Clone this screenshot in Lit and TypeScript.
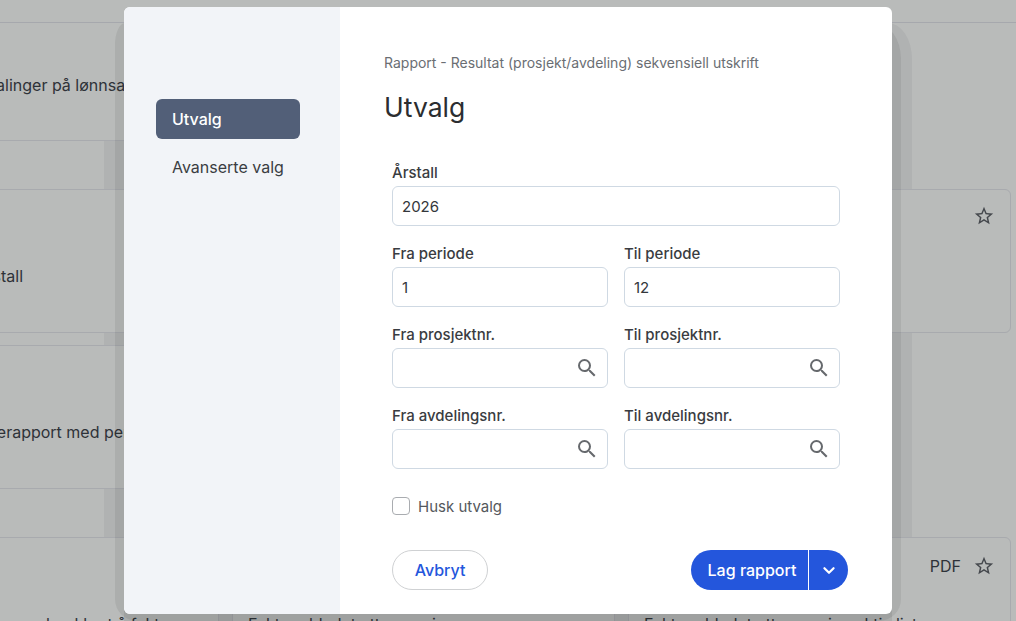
import { LitElement, html, css, svg } from 'lit';
import { customElement } from 'lit/decorators.js';

const starIcon = html`<svg class="star" viewBox="0 0 24 24" width="22" height="22">
  ${svg`<path d="M22 9.24l-7.19-.62L12 2 9.19 8.63 2 9.24l5.46 4.73L5.82 21 12 17.27 18.18 21l-1.63-7.03L22 9.24zM12 15.4l-3.76 2.27 1-4.28-3.32-2.88 4.38-.38L12 6.1l1.71 4.04 4.38.38-3.32 2.88 1 4.28L12 15.4z"/>`}
</svg>`;

const searchIcon = html`<svg class="search" viewBox="0 0 24 24" width="24" height="24">
  ${svg`<path d="M15.5 14h-.79l-.28-.27A6.47 6.47 0 0 0 16 9.5 6.5 6.5 0 1 0 9.5 16c1.61 0 3.09-.59 4.23-1.57l.27.28v.79l5 4.99L20.49 19l-4.99-5zm-6 0C7.01 14 5 11.99 5 9.5S7.01 5 9.5 5 14 7.01 14 9.5 11.99 14 9.5 14z"/>`}
</svg>`;

@customElement('app-root')
export class AppRoot extends LitElement {
  static styles = css`
    :host {
      display: block;
      font-family: Inter, "Liberation Sans", sans-serif;
    }
    .page {
      position: relative;
      width: 1016px;
      height: 621px;
      overflow: hidden;
      background: #b9bbba;
      color: #2e3238;
    }
    /* banded modal shadow, one layer under the cards and two above */
    .shade {
      position: absolute;
      top: 23px;
    }
    .shade-wide {
      left: 104px;
      width: 808px;
      bottom: 0;
      background: rgba(20, 20, 30, 0.05);
      border-radius: 24px 24px 0 0 / 36px 36px 0 0;
    }
    .shade-near {
      left: 115px;
      width: 786px;
      bottom: 0;
      background: rgba(20, 20, 30, 0.08);
      border-radius: 10px 26px 22px 22px / 22px 36px 22px 22px;
    }
    .shade-under {
      top: 600px;
      left: 124px;
      width: 768px;
      bottom: 0;
      background: rgba(0, 0, 0, 0.07);
    }
    .rows {
      position: relative;
      display: flex;
      flex-direction: column;
    }
    .topbar {
      height: 22px;
      border-bottom: 1px solid #a6a8ad;
    }
    .row {
      display: grid;
      grid-template-columns: repeat(3, 383px);
      column-gap: 13px;
      margin-left: -164px;
      flex: none;
    }
    .row-first { height: 118px; }
    .row-mid { height: 144px; margin-top: 48px; }
    .row-close { height: 144px; margin-top: 12px; }
    .row-last { height: 120px; margin-top: 48px; }
    .card {
      box-sizing: border-box;
      border: 1px solid #a8aaae;
      border-radius: 6px;
      background: #b9bbba;
      font-size: 16px;
      line-height: 20px;
      padding: 76px 15px 0;
      white-space: nowrap;
    }
    .row-first .card {
      border-top: none;
      border-radius: 0 0 6px 6px;
      padding-top: 52px;
    }
    .card.right {
      padding-top: 14px;
    }
    .tools {
      display: flex;
      justify-content: flex-end;
      gap: 12px;
    }
    .pdf {
      line-height: 28px;
    }
    .star {
      fill: #45484d;
      display: block;
      margin-top: 1px;
    }
    .row-last .star {
      margin-top: 3px;
    }
    .row-last .name {
      margin-top: 34px;
    }
    .modal {
      position: absolute;
      left: 124px;
      top: 7px;
      width: 768px;
      height: 607px;
      display: flex;
      border-radius: 6px;
      overflow: hidden;
      background: #fff;
    }
    .side {
      box-sizing: border-box;
      width: 216px;
      padding: 92px 40px 0 32px;
      background: #f2f4f8;
      display: flex;
      flex-direction: column;
      gap: 8px;
    }
    .nav {
      height: 40px;
      display: flex;
      align-items: center;
      padding-left: 16px;
      border-radius: 6px;
      font-size: 16px;
      color: #3a3d42;
    }
    .nav.active {
      background: #525f78;
      color: #fff;
      font-weight: 500;
    }
    .main {
      flex: 1;
      box-sizing: border-box;
      padding: 47px 44px 0;
      display: flex;
      flex-direction: column;
    }
    .crumb {
      font-size: 14px;
      line-height: 18px;
      color: #6a6e73;
    }
    h1 {
      margin: 19px 0 0;
      font-size: 26.5px;
      line-height: 32px;
      font-weight: 400;
      color: #2b2d30;
    }
    .form {
      margin: 40px 8px 0;
      display: grid;
      grid-template-columns: 1fr 1fr;
      column-gap: 16px;
      row-gap: 18px;
    }
    .wide { grid-column: 1 / -1; }
    label {
      display: block;
      margin-bottom: 3px;
      font-size: 15px;
      line-height: 20px;
      font-weight: 450;
      color: #393c41;
    }
    .input {
      box-sizing: border-box;
      height: 40px;
      border: 1px solid #cfd9e3;
      border-radius: 6px;
      padding: 0 8px 0 9px;
      display: flex;
      align-items: center;
      justify-content: space-between;
      font-size: 15px;
      color: #34373b;
    }
    .search {
      fill: #66696d;
      margin-left: auto;
      display: block;
    }
    .check {
      margin: 28px 8px 0;
      display: flex;
      align-items: center;
      gap: 8px;
      font-size: 15px;
      color: #55585c;
      height: 18px;
    }
    .box {
      box-sizing: border-box;
      width: 18px;
      height: 18px;
      border: 1px solid #a9acb0;
      border-radius: 4px;
    }
    .actions {
      margin: 35px 0 0 8px;
      display: flex;
      justify-content: space-between;
    }
    .btn {
      box-sizing: border-box;
      height: 40px;
      font-size: 16px;
      font-weight: 500;
      display: flex;
      align-items: center;
      justify-content: center;
    }
    .cancel {
      width: 96px;
      border: 1px solid #cfd1d3;
      border-radius: 20px;
      color: #2456dc;
    }
    .split {
      display: flex;
      color: #fff;
    }
    .primary {
      width: 117px;
      padding-left: 5px;
      background: #2456dc;
      border-radius: 20px 0 0 20px;
    }
    .more {
      width: 39px;
      margin-left: 1px;
      background: #2456dc;
      border-radius: 0 20px 20px 0;
    }
    .more svg {
      fill: none;
      stroke: #fff;
      stroke-width: 2.4;
      stroke-linecap: round;
      stroke-linejoin: round;
      display: block;
    }
  `;

  private field(name: string, value = '', lookup = false, wide = false) {
    return html`<div class=${wide ? 'wide' : ''}>
      <label>${name}</label>
      <div class="input">${value}${lookup ? searchIcon : ''}</div>
    </div>`;
  }

  render() {
    return html`
      <div class="page">
        <div class="shade shade-wide"></div>
        <div class="rows">
          <div class="topbar"></div>
          <div class="row row-first">
            <div class="card">Oversikt over utbetalinger på lønnsart</div>
          </div>
          <div class="row row-mid">
            <div class="card">Feriepenger per årstall</div>
            <div class="card"></div>
            <div class="card right"><div class="tools">${starIcon}</div></div>
          </div>
          <div class="row row-close">
            <div class="card">Lønn og arbeidsgiverapport med periode</div>
          </div>
          <div class="row row-last">
            <div class="card">Oversikt innbetalinger pr. bankkort å fakturere</div>
            <div class="card">Faktura bladet etter versjon</div>
            <div class="card right">
              <div class="tools"><span class="pdf">PDF</span>${starIcon}</div>
              <div class="name">Faktura bladet etter versjon aktiv liste</div>
            </div>
          </div>
        </div>
        <div class="shade shade-near"></div>
        <div class="shade shade-under"></div>

        <div class="modal">
          <div class="side">
            <div class="nav active">Utvalg</div>
            <div class="nav">Avanserte valg</div>
          </div>
          <div class="main">
            <div class="crumb">Rapport - Resultat (prosjekt/avdeling) sekvensiell utskrift</div>
            <h1>Utvalg</h1>
            <div class="form">
              ${this.field('Årstall', '2026', false, true)}
              ${this.field('Fra periode', '1')}
              ${this.field('Til periode', '12')}
              ${this.field('Fra prosjektnr.', '', true)}
              ${this.field('Til prosjektnr.', '', true)}
              ${this.field('Fra avdelingsnr.', '', true)}
              ${this.field('Til avdelingsnr.', '', true)}
            </div>
            <div class="check"><span class="box"></span>Husk utvalg</div>
            <div class="actions">
              <div class="btn cancel">Avbryt</div>
              <div class="split">
                <div class="btn primary">Lag rapport</div>
                <div class="btn more">
                  <svg viewBox="0 0 24 24" width="22" height="22"><path d="M7 10l5 5 5-5"/></svg>
                </div>
              </div>
            </div>
          </div>
        </div>
      </div>
    `;
  }
}
